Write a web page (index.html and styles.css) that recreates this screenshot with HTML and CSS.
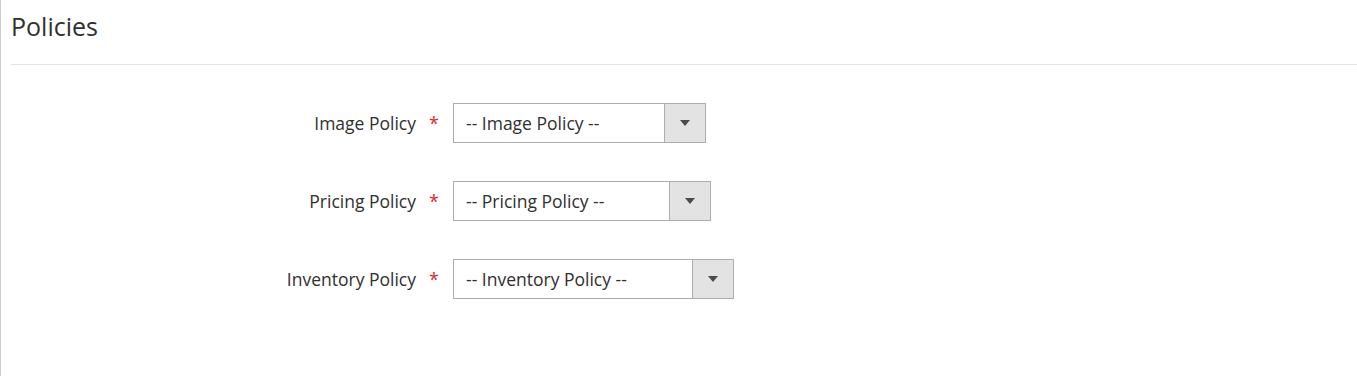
FILE: index.html
```html
<!DOCTYPE html>
<html>
<head>
<meta charset="utf-8">
<link rel="stylesheet" href="styles.css">
</head>
<body>
<div class="panel">
  <div class="title">Policies</div>
  <div class="fields">
    <div class="row">
      <div class="label">Image Policy</div>
      <div class="req">*</div>
      <div class="select"><span class="value">-- Image Policy --</span><span class="arrow"></span></div>
    </div>
    <div class="row">
      <div class="label">Pricing Policy</div>
      <div class="req">*</div>
      <div class="select"><span class="value">-- Pricing Policy --</span><span class="arrow"></span></div>
    </div>
    <div class="row">
      <div class="label">Inventory Policy</div>
      <div class="req">*</div>
      <div class="select"><span class="value">-- Inventory Policy --</span><span class="arrow"></span></div>
    </div>
  </div>
</div>
</body>
</html>
```
FILE: styles.css
```css
html, body {
  margin: 0;
  padding: 0;
  background: #fff;
}
body {
  font-family: "Open Sans", sans-serif;
  color: #303030;
}
.panel {
  border-left: 1px solid #cccccc;
  height: 376px;
  box-sizing: border-box;
  padding-left: 10px;
}
.title {
  font-size: 25px;
  line-height: 28px;
  padding-top: 12px;
  padding-bottom: 24px;
  border-bottom: 1px solid #e3e3e3;
  color: #303030;
}
.fields {
  padding-top: 38px;
  display: flex;
  flex-direction: column;
  gap: 38px;
}
.row {
  display: flex;
  align-items: center;
  height: 40px;
}
.label {
  width: 405px;
  text-align: right;
  font-size: 17.5px;
  color: #303030;
}
.req {
  width: 36px;
  padding-right: 1px;
  text-align: center;
  color: #e22626;
  font-size: 18px;
}
.select {
  display: flex;
  height: 40px;
  box-sizing: border-box;
  border: 1px solid #adadad;
  background: #fff;
}
.value {
  padding: 0 65px 0 12px;
  line-height: 38px;
  font-size: 17.5px;
  color: #303030;
}
.arrow {
  width: 40px;
  background: #e3e3e3;
  border-left: 1px solid #adadad;
  display: flex;
  align-items: center;
  justify-content: center;
}
.arrow::after {
  content: "";
  border-left: 5px solid transparent;
  border-right: 5px solid transparent;
  border-top: 6px solid #514943;
}
```
